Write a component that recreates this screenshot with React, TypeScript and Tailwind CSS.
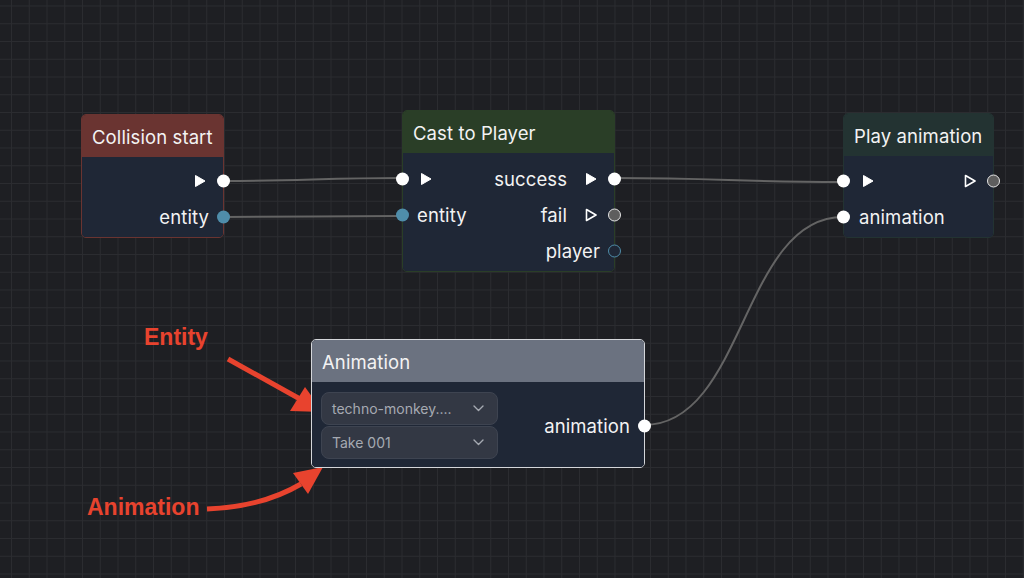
import React from 'react';

// Node graph canvas: four nodes, edges and two annotation arrows.

type HandleKind = 'exec' | 'data' | 'idle' | 'hollow' | 'plain';

const Handle = ({ kind, side }: { kind: HandleKind; side: 'left' | 'right' }) => {
    const look: Record<HandleKind, string> = {
        exec: 'bg-white',
        plain: 'bg-white',
        data: 'bg-[#4f8daa]',
        idle: 'bg-[#5e5e5e] border-[1.5px] border-[#e5e5e5]',
        hollow: 'bg-[#1f2736] border-[1.5px] border-[#4f8daa]',
    };
    return (
        <span
            className={`absolute top-1/2 -translate-y-1/2 w-[13px] h-[13px] rounded-full ${look[kind]} ${
                side === 'left' ? 'left-[-7px]' : 'right-[-7px]'
            }`}
        />
    );
};

const Arrow = ({ filled }: { filled: boolean }) => (
    <svg width="12" height="14" viewBox="0 0 12 14" className="shrink-0">
        <polygon
            points="1.5,1.5 11,7 1.5,12.5"
            fill={filled ? '#ffffff' : 'none'}
            stroke="#ffffff"
            strokeWidth={filled ? 1 : 1.6}
            strokeLinejoin="round"
        />
    </svg>
);

interface NodeProps {
    title: string;
    className: string;
    header: string;
    border: string;
    bodyPad: string;
    children: React.ReactNode;
}

const Node = ({ title, className, header, border, bodyPad, children }: NodeProps) => (
    <div className={`absolute rounded-[5px] border ${border} ${className}`}>
        <div className={`h-[42px] rounded-t-[4px] px-[10px] pt-[3px] flex items-center text-[18.5px] tracking-[0.1px] text-[#f3f3f3] ${header}`}>
            {title}
        </div>
        <div className={`bg-[#1f2736] rounded-b-[4px] ${bodyPad}`}>{children}</div>
    </div>
);

const Row = ({ children, className = '' }: { children: React.ReactNode; className?: string }) => (
    <div className={`relative h-9 flex items-center text-[18.5px] tracking-[0.1px] text-[#f3f3f3] ${className}`}>{children}</div>
);

const Select = ({ label }: { label: string }) => (
    <div className="h-[33px] w-[177px] rounded-lg bg-[#333844] border border-[#3e4451] flex items-center justify-between pl-[10px] pr-[13px] text-[14px] text-[#a6aab2]">
        <span>{label}</span>
        <svg width="11" height="7" viewBox="0 0 11 7">
            <path d="M1 1 L5.5 5.5 L10 1" fill="none" stroke="#a6aab2" strokeWidth="1.4" strokeLinecap="round" strokeLinejoin="round" />
        </svg>
    </div>
);

export default function App() {
    return (
        <div
            className="relative w-[1024px] h-[578px] overflow-hidden bg-[#1e1f23] font-['Inter',sans-serif] bg-[linear-gradient(to_right,#2b2c30_1px,transparent_1px),linear-gradient(to_bottom,#2b2c30_1px,transparent_1px)] bg-[size:17.75px_17.75px] bg-[position:11px_5.5px]"
        >
            {/* edges + annotation arrows */}
            <svg className="absolute inset-0" width="1024" height="578">
                <g fill="none" stroke="#646464" strokeWidth="2">
                    <path d="M223 181 C 300 181 325 178 402 178" />
                    <path d="M223 217 C 300 217 325 216 402 216" />
                    <path d="M614 178 C 720 178 737 182 843 182" />
                    <path d="M644 425 C 745 425 742 217 843 217" />
                </g>
                <g fill="#e8432e" stroke="#e8432e">
                    <path d="M228 359 L 300 399" strokeWidth="5" fill="none" strokeLinecap="butt" />
                    <polygon points="323,412 290,411 305,387" stroke="none" />
                    <path d="M207 509 Q 262 507 301 484" strokeWidth="5" fill="none" />
                    <polygon points="323,467 293,473 308,494" stroke="none" />
                </g>
            </svg>

            <div className="absolute left-[144px] top-[320px] text-[23px] font-bold text-[#e8432e] font-['Liberation_Sans',sans-serif]">
                Entity
            </div>
            <div className="absolute left-[87px] top-[490px] text-[23px] font-bold text-[#e8432e] font-['Liberation_Sans',sans-serif]">
                Animation
            </div>

            {/* Collision start */}
            <Node
                title="Collision start"
                className="left-[81px] top-[114px] w-[143px]"
                header="bg-[#6a3431]"
                border="border-[#6a3431]"
                bodyPad="pt-[6px] pb-[2px]"
            >
                <Row className="justify-end pr-[17px]">
                    <Arrow filled />
                    <Handle kind="exec" side="right" />
                </Row>
                <Row className="justify-end pr-[14px] pt-[2px]">
                    entity
                    <Handle kind="data" side="right" />
                </Row>
            </Node>

            {/* Cast to Player */}
            <Node
                title="Cast to Player"
                className="left-[402px] top-[110px] w-[213px]"
                header="bg-[#2a3e27]"
                border="border-[#2a3e27]"
                bodyPad="pt-[8px] pb-[2px]"
            >
                <Row className="justify-between pl-[17px] pr-[17px]">
                    <Handle kind="exec" side="left" />
                    <Arrow filled />
                    <span className="flex items-center gap-[18px]">
                        <span className="pt-[2px]">success</span>
                        <Arrow filled />
                    </span>
                    <Handle kind="exec" side="right" />
                </Row>
                <Row className="justify-between pl-[14px] pr-[17px]">
                    <Handle kind="data" side="left" />
                    <span className="pt-[2px]">entity</span>
                    <span className="flex items-center gap-[18px]">
                        <span className="pt-[2px]">fail</span>
                        <Arrow filled={false} />
                    </span>
                    <Handle kind="idle" side="right" />
                </Row>
                <Row className="justify-end pr-[14px] pt-[2px]">
                    player
                    <Handle kind="hollow" side="right" />
                </Row>
            </Node>

            {/* Play animation */}
            <Node
                title="Play animation"
                className="left-[843px] top-[113px] w-[151px]"
                header="bg-[#233332]"
                border="border-[#233332]"
                bodyPad="pt-[7px] pb-[2px]"
            >
                <Row className="justify-between pl-[18px] pr-[17px]">
                    <Handle kind="exec" side="left" />
                    <Arrow filled />
                    <Arrow filled={false} />
                    <Handle kind="idle" side="right" />
                </Row>
                <Row className="pl-[15px] pt-[2px]">
                    <Handle kind="plain" side="left" />
                    animation
                </Row>
            </Node>

            {/* Animation (selected) */}
            <Node
                title="Animation"
                className="left-[311px] top-[339px] w-[334px]"
                header="bg-[#6b7280]"
                border="border-[#d4d6da]"
                bodyPad="pt-[10px] pb-[8px] pl-[9px] pr-[14px]"
            >
                <div className="relative flex items-center justify-between">
                    <div className="flex flex-col gap-px">
                        <Select label="techno-monkey...." />
                        <Select label="Take 001" />
                    </div>
                    <span className="text-[18.5px] tracking-[0.1px] text-[#f3f3f3] pt-[2px]">animation</span>
                    <span className="absolute right-[-21px] top-1/2 -translate-y-1/2 w-[13px] h-[13px] rounded-full bg-white" />
                </div>
            </Node>
        </div>
    );
}
